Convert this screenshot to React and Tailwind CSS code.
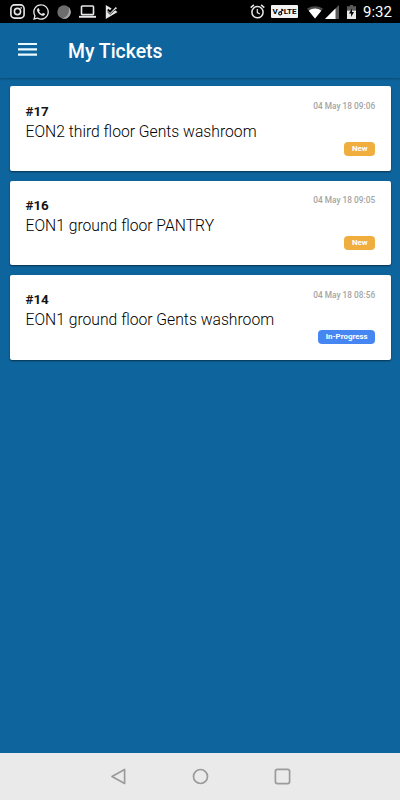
import React from 'react';
import { FaWhatsapp } from 'react-icons/fa';

const tickets = [
  {
    id: 17,
    title: 'EON2 third floor Gents washroom',
    date: '04 May 18 09:06',
    status: 'New',
  },
  {
    id: 16,
    title: 'EON1 ground floor PANTRY',
    date: '04 May 18 09:05',
    status: 'New',
  },
  {
    id: 14,
    title: 'EON1 ground floor Gents washroom',
    date: '04 May 18 08:56',
    status: 'In-Progress',
  },
];

const statusClass = {
  New: 'bg-[#f0ae3e]',
  'In-Progress': 'bg-[#4686f2]',
};

function StatusBar() {
  return (
    <div className="h-[23px] shrink-0 bg-black flex items-center pl-[10px] pr-2 text-[#e8e8e8]">
      <svg width="15" height="15" viewBox="0 0 15 15" fill="none" stroke="currentColor" strokeWidth="1.6">
        <rect x="0.9" y="0.9" width="13.2" height="13.2" rx="3.6" />
        <circle cx="7.5" cy="7.5" r="3.1" />
        <circle cx="11.2" cy="3.9" r="0.5" strokeWidth="0.9" />
      </svg>
      <FaWhatsapp size={18} className="ml-[7px]" />
      <svg className="ml-[7px]" width="14" height="14" viewBox="0 0 14 14">
        <circle cx="7" cy="7" r="6.7" fill="#6d6d6d" />
        <path d="M11.7 2.2A6.7 6.7 0 0 1 5 13.4C10 12.6 13 8 11.7 2.2Z" fill="#a5a5a5" />
      </svg>
      <svg className="ml-[8px]" width="17" height="13" viewBox="0 0 17 13" fill="none" stroke="currentColor">
        <rect x="2.5" y="1" width="12" height="8.6" rx="0.8" strokeWidth="1.6" />
        <path d="M0 11.8H17" strokeWidth="1.9" />
      </svg>
      <svg className="ml-[9px]" width="13" height="14" viewBox="0 0 13 14">
        <path d="M0.8 0L6.6 3.4L5 5.2L3.4 3.8L2.2 5.2L5.1 7.9L9.6 3.2L10.8 2L12 3.2L10.2 5.4L12.6 7L0.8 14Z" fill="currentColor" />
        <path d="M2.4 6.8L5.2 9.4L11.2 3.8" fill="none" stroke="#000" strokeWidth="0.8" />
      </svg>

      <div className="flex-1" />

      <svg width="15" height="15" viewBox="0 0 15 15" fill="none" stroke="currentColor" strokeWidth="1.5">
        <circle cx="7.5" cy="8.2" r="5.6" />
        <path d="M7.3 5V8.6L9.8 10.1" strokeWidth="1.2" />
        <path d="M0.7 3.6L3.9 0.9M14.3 3.6L11.1 0.9" />
      </svg>
      <div className="ml-[6px] mr-[9px] w-[27px] h-[13px] rounded-[1px] bg-[#f2f2f2] text-black flex items-center justify-center text-[8px] leading-none font-bold">
        V
        <svg width="6" height="8" viewBox="0 0 6 8" fill="none" stroke="#000" strokeWidth="1.1">
          <circle cx="2.2" cy="5.4" r="1.5" />
          <path d="M2.6 4L5 1.4M3.4 1L5.4 2.8" />
        </svg>
        LTE
      </div>
      <svg className="mt-[2px]" width="16" height="13" viewBox="0 0 16 13">
        <path d="M0 2.6C4.6 -0.7 11.4 -0.7 16 2.6L8 12.5Z" fill="#4a4a4a" />
        <path d="M1.7 4.7C5.4 1.9 10.6 1.9 14.3 4.7L8 12.5Z" fill="#fff" />
      </svg>
      <svg className="ml-[2px] mt-px" width="14" height="14" viewBox="0 0 14 14">
        <path d="M14 0V14H0Z" fill="#5a5a5a" />
        <path d="M10.5 3.5V14H0Z" fill="#fff" />
      </svg>
      <svg className="ml-[8px]" width="9" height="14" viewBox="0 0 9 14">
        <path d="M3 0H6V1.3H9V5.5H0V1.3H3Z" fill="#5a5a5a" />
        <path d="M0 5.5H9V14H0Z" fill="#e8e8e8" />
        <path d="M5 3.6L2 8.6H4.1V12L7 7H5Z" fill="#000" />
      </svg>
      <span className="ml-[7px] mt-[2px] w-[29px] text-[15px] leading-none text-white whitespace-nowrap">9:32</span>
    </div>
  );
}

function TicketCard({ ticket }) {
  return (
    <div className="h-[84.7px] rounded-[2px] bg-white flex justify-between pl-4 pr-[15.5px] shadow-[0_1px_2px_rgba(0,0,0,0.5)]">
      <div className="pt-[15.2px] whitespace-nowrap">
        <h2 className="text-[13.4px] leading-[20px] font-bold text-[#151515]">#{ticket.id}</h2>
        <p className="text-[15.7px] leading-[20px] font-light text-black">{ticket.title}</p>
      </div>
      <div className="pt-[13.7px] pb-[15.5px] flex flex-col items-end justify-between whitespace-nowrap">
        <time className="text-[8.3px] leading-[12px] font-medium text-[#a4a4a4]">{ticket.date}</time>
        <span className={`h-[14px] px-[7.5px] rounded-[4px] text-[7.9px] leading-[13px] font-bold text-white ${statusClass[ticket.status]}`}>
          {ticket.status}
        </span>
      </div>
    </div>
  );
}

export default function App() {
  return (
    <div className="w-[400px] h-[800px] overflow-hidden flex flex-col bg-[#0e659d] font-['Roboto',sans-serif]">
      <StatusBar />

      {/* Toolbar */}
      <header className="h-[55px] shrink-0 flex items-center pl-[18px] text-white shadow-[0_1px_2px_rgba(0,0,0,0.3)]">
        <svg className="-mt-[3px]" width="19" height="13" viewBox="0 0 19 13" fill="#e9fbff">
          <path d="M0 0H19V2.1H0ZM0 5.3H19V7.4H0ZM0 10.6H19V12.7H0Z" />
        </svg>
        <h1 className="ml-[31px] mt-[2px] text-[19.4px] leading-none font-medium">My Tickets</h1>
      </header>

      {/* Ticket list */}
      <main className="flex-1 flex flex-col gap-[9.6px] pt-[8.4px] pl-[9.5px] pr-[9.4px]">
        {tickets.map((ticket) => (
          <TicketCard key={ticket.id} ticket={ticket} />
        ))}
      </main>

      {/* Android navigation */}
      <nav className="h-[47px] shrink-0 flex items-center pl-[110px] bg-[#eaeaea]">
        <svg width="16" height="17" viewBox="0 0 16 17" fill="none" stroke="#9b9b9b" strokeWidth="1.7" strokeLinejoin="round">
          <path d="M14.6 1.5V15.5L2 8.5Z" />
        </svg>
        <svg className="ml-[65.5px]" width="17" height="17" viewBox="0 0 17 17" fill="none" stroke="#9b9b9b" strokeWidth="1.7">
          <circle cx="8.5" cy="8.5" r="7" />
        </svg>
        <svg className="ml-[65px]" width="17" height="17" viewBox="0 0 17 17" fill="none" stroke="#9b9b9b" strokeWidth="1.7">
          <rect x="1.4" y="1.4" width="14.2" height="14.2" rx="2" />
        </svg>
      </nav>
    </div>
  );
}
